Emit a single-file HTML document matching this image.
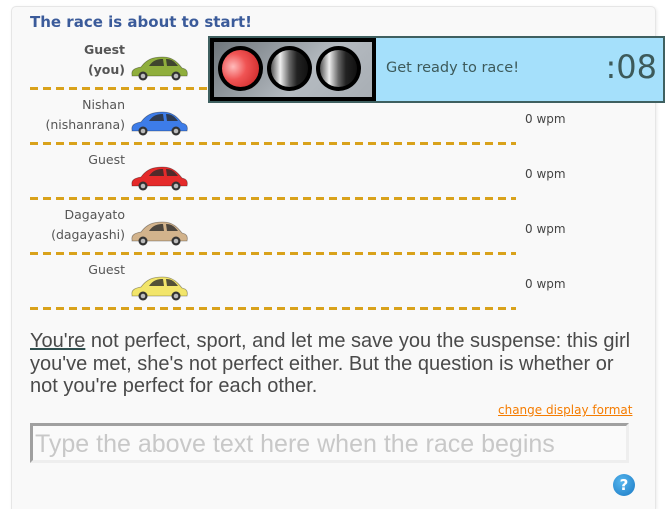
<!DOCTYPE html>
<html style="width:672px;height:509px;overflow:hidden"><head><meta charset="utf-8">
<style>
*{margin:0;padding:0;box-sizing:border-box}
body{width:672px;height:509px;background:#fff;font-family:"DejaVu Sans","Liberation Sans",sans-serif;position:relative;overflow:hidden}
.panel{position:absolute;left:11px;top:6px;width:645px;height:503px;background:#f9f9f9;border:1px solid #e6e6e6;border-bottom:none;border-radius:5px 5px 0 0;box-shadow:1px 1px 3px rgba(0,0,0,0.08)}
.title{position:absolute;left:30px;top:13px;font-size:15px;font-weight:bold;color:#3b5b9a}
.name{position:absolute;right:547px;width:120px;text-align:right;font-size:12.5px;color:#555;line-height:20px}
.name b{color:#555}
.dash{position:absolute;left:30px;width:486px;height:3px;background:repeating-linear-gradient(90deg,#d9a21b 0 8px,transparent 8px 13px)}
.car{position:absolute;left:129px;width:60px;height:26px}
.wpm{position:absolute;left:525px;font-size:12px;color:#444}
.tl{position:absolute;left:208px;top:36px;width:457px;height:67px;border:2px solid #3f6060;background:#a5e0fb}
.tlbox{position:absolute;left:0;top:0;width:166px;height:63px;background:#000;padding:4px}
.tlin{width:100%;height:100%;background:linear-gradient(135deg,#6e757b,#b4bac0 60%,#a8aeb4);position:relative}
.light{position:absolute;top:4px;width:45px;height:45px;border-radius:50%;background:#000}
.light i{position:absolute;left:4px;top:4px;width:37px;height:37px;border-radius:50%}
.ready{position:absolute;left:176px;top:22px;font-size:14.5px;color:#3d5a5a}
.timer{position:absolute;right:6px;top:10px;font-size:32px;color:#3d5a5a}
.text{position:absolute;left:30px;top:330px;width:608px;font-family:"Liberation Sans",Arial,sans-serif;font-size:20px;line-height:22.5px;color:#4a4a4a}
.text u{text-decoration-color:#2f4f4f}
.link{position:absolute;left:498px;top:403px;font-size:12px;color:#f57c00;text-decoration:underline}
.input{position:absolute;left:30px;top:423px;width:599px;height:40px;border:3px solid #a0a0a0;border-right-color:#eee;border-bottom-color:#eee;background:#fafafa;font-family:"Liberation Sans",Arial,sans-serif;font-size:25px;color:#c8c8c8;padding:4px 0 0 2px}
.help{position:absolute;left:613px;top:474px;width:22px;height:22px;border-radius:50%;background:radial-gradient(circle at 40% 35%,#56b6ee,#1a79c4);color:#fff;font-weight:bold;font-size:15px;text-align:center;line-height:22px}
</style></head><body>
<svg width="0" height="0" style="position:absolute">
<defs>
<symbol id="car" viewBox="0 0 60 26">
<path d="M3 20 C2 15 6 13 12 12 C18 4 24 2 34 2 C44 2 49 8 53 13 C58 14 59 17 58 21 L3 21 Z" fill="currentColor" stroke="rgba(0,0,0,0.35)" stroke-width="0.8"/>
<path d="M20 11 C24 5 29 4 34 4 L35 11 Z M37 4 C43 4 46 7 49 11 L38 11 Z" fill="#2b2b2b" opacity="0.8"/>
<circle cx="14" cy="21" r="4.5" fill="#333"/><circle cx="14" cy="21" r="2.3" fill="#bbb"/>
<circle cx="47" cy="21" r="4.5" fill="#333"/><circle cx="47" cy="21" r="2.3" fill="#bbb"/>
</symbol></defs></svg>
<div class="panel"></div>
<div class="title">The race is about to start!</div>

<div class="name" style="top:40px"><b>Guest<br>(you)</b></div>
<svg class="car" style="top:55px;color:#8fae3c"><use href="#car"/></svg>
<div class="dash" style="top:87px"></div>

<div class="name" style="top:95px">Nishan<br>(nishanrana)</div>
<svg class="car" style="top:110px;color:#3d7ce8"><use href="#car"/></svg>
<div class="wpm" style="top:112px">0 wpm</div>
<div class="dash" style="top:142px"></div>

<div class="name" style="top:150px">Guest</div>
<svg class="car" style="top:165px;color:#e52a2a"><use href="#car"/></svg>
<div class="wpm" style="top:167px">0 wpm</div>
<div class="dash" style="top:197px"></div>

<div class="name" style="top:205px">Dagayato<br>(dagayashi)</div>
<svg class="car" style="top:220px;color:#d2b38c"><use href="#car"/></svg>
<div class="wpm" style="top:222px">0 wpm</div>
<div class="dash" style="top:252px"></div>

<div class="name" style="top:260px">Guest</div>
<svg class="car" style="top:275px;color:#f2e56a"><use href="#car"/></svg>
<div class="wpm" style="top:277px">0 wpm</div>
<div class="dash" style="top:307px"></div>

<div class="tl">
 <div class="tlbox"><div class="tlin">
  <div class="light" style="left:4px"><i style="background:radial-gradient(circle at 30% 45%,#fbb 0,#f05454 40%,#c62020 100%)"></i></div>
  <div class="light" style="left:53px"><i style="background:linear-gradient(90deg,#555,#eee 25%,#666 50%,#222 70%,#111)"></i></div>
  <div class="light" style="left:102px"><i style="background:linear-gradient(90deg,#555,#eee 25%,#666 50%,#222 70%,#111)"></i></div>
 </div></div>
 <div class="ready">Get ready to race!</div>
 <div class="timer">:08</div>
</div>

<div class="text"><u>You're</u> not perfect, sport, and let me save you the suspense: this girl you've met, she's not perfect either. But the question is whether or not you're perfect for each other.</div>
<div class="link">change display format</div>
<div class="input">Type the above text here when the race begins</div>
<div class="help">?</div>
</body></html>
